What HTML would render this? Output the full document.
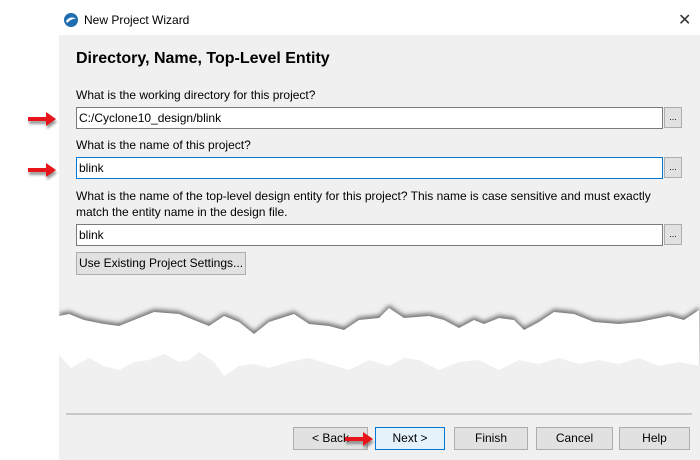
<!DOCTYPE html>
<html><head><style>
*{margin:0;padding:0;box-sizing:border-box}
body{width:700px;height:460px;background:#fff;position:relative;overflow:hidden;font-family:"Liberation Sans","DejaVu Sans",sans-serif;font-size:12px;color:#000}
.a{position:absolute}
.body{left:59px;top:35px;width:641px;height:425px;background:#f0f0f0}
.inp{position:absolute;left:76px;width:587px;height:22px;background:#fff;border:1px solid #7a7a7a;padding:3px 2px;font-size:12px}
.dot{position:absolute;left:664px;width:18px;height:21px;background:#e1e1e1;border:1px solid #adadad;font-size:9px;text-align:center;line-height:18px}
.btn{position:absolute;top:427px;height:23px;background:#e1e1e1;border:1px solid #adadad;text-align:center;line-height:21px;font-size:12px}
</style></head><body>
<svg class="a" style="left:63px;top:12px" width="16" height="16" viewBox="0 0 16 16"><circle cx="8" cy="8" r="7" fill="#1f6fb0"/><path d="M3 9 Q8 3 13 7 Q9 6 4 11Z" fill="#fff"/></svg>
<div class="a" style="left:84px;top:13px;font-size:12px">New Project Wizard</div>
<div class="a" style="left:678px;top:10px;font-size:16px;color:#333">✕</div>
<div class="a body"></div>
<div class="a" style="left:76px;top:50px;font-size:16px;font-weight:bold">Directory, Name, Top-Level Entity</div>
<div class="a" style="left:76px;top:88px">What is the working directory for this project?</div>
<div class="inp" style="top:107px">C:/Cyclone10_design/blink</div><div class="dot" style="top:107px">...</div>
<div class="a" style="left:76px;top:138px">What is the name of this project?</div>
<div class="inp" style="top:157px;border-color:#0078d7">blink</div><div class="dot" style="top:157px">...</div>
<div class="a" style="left:76px;top:188px;line-height:16px">What is the name of the top-level design entity for this project? This name is case sensitive and must exactly<br>match the entity name in the design file.</div>
<div class="inp" style="top:224px">blink</div><div class="dot" style="top:224px">...</div>
<div class="btn" style="left:76px;top:252px;width:170px;height:23px">Use Existing Project Settings...</div>
<svg class="a" style="left:59px;top:290px" width="641" height="100" viewBox="0 0 641 100">
<defs><filter id="s" x="-5%" y="-50%" width="110%" height="200%"><feGaussianBlur stdDeviation="2"/></filter></defs>
<path d="M0 18 L10 16 L25 22 L45 26 L60 28 L75 22 L95 14 L120 16 L135 22 L150 28 L165 18 L180 24 L195 36 L210 24 L235 16 L250 26 L270 28 L285 32 L300 22 L320 20 L330 10 L345 20 L370 18 L385 22 L400 30 L415 22 L425 26 L440 20 L455 22 L465 32 L480 24 L495 14 L515 16 L535 24 L560 26 L580 24 L600 20 L610 18 L625 22 L640 12 L641 100 L0 100Z" fill="#777" filter="url(#s)" transform="translate(0,5)"/>
<path d="M0 18 L10 16 L25 22 L45 26 L60 28 L75 22 L95 14 L120 16 L135 22 L150 28 L165 18 L180 24 L195 36 L210 24 L235 16 L250 26 L270 28 L285 32 L300 22 L320 20 L330 10 L345 20 L370 18 L385 22 L400 30 L415 22 L425 26 L440 20 L455 22 L465 32 L480 24 L495 14 L515 16 L535 24 L560 26 L580 24 L600 20 L610 18 L625 22 L640 12 L641 100 L0 100Z" fill="#fff" transform="translate(0,8)"/>
<path d="M0 55 L12 68 L30 58 L45 66 L60 70 L75 62 L90 60 L105 54 L120 62 L130 60 L140 52 L155 62 L165 76 L180 66 L195 64 L210 68 L230 62 L250 58 L270 64 L290 70 L310 60 L330 66 L345 58 L360 60 L380 70 L400 62 L420 60 L440 70 L460 60 L480 64 L500 58 L520 64 L540 60 L560 64 L580 58 L600 66 L620 62 L641 66 L641 100 L0 100Z" fill="#f0f0f0" transform="translate(0,10)"/>
</svg>
<div class="a" style="left:66px;top:413px;width:626px;height:2px;background:#c8c8c8"></div>
<div class="btn" style="left:293px;width:75px">&lt; Back</div>
<div class="btn" style="left:375px;width:70px;border-color:#0078d7;background:#e5f1fb">Next &gt;</div>
<div class="btn" style="left:454px;width:74px">Finish</div>
<div class="btn" style="left:536px;width:77px">Cancel</div>
<div class="btn" style="left:619px;width:71px">Help</div>
<svg class="a" style="left:0;top:0" width="700" height="460">
<defs><filter id="d"><feGaussianBlur stdDeviation="1.2"/></filter></defs>
<g fill="#555" filter="url(#d)" opacity=".6" transform="translate(1,3)">
<path d="M28 117h18v-5l10 7-10 7v-5H28z"/><path d="M28 168h18v-5l10 7-10 7v-5H28z"/><path d="M345 437h18v-5l10 7-10 7v-5h-18z"/></g>
<g fill="#e8141b">
<path d="M28 117h18v-5l10 7-10 7v-5H28z"/><path d="M28 168h18v-5l10 7-10 7v-5H28z"/><path d="M345 437h18v-5l10 7-10 7v-5h-18z"/></g>
</svg>
</body></html>
